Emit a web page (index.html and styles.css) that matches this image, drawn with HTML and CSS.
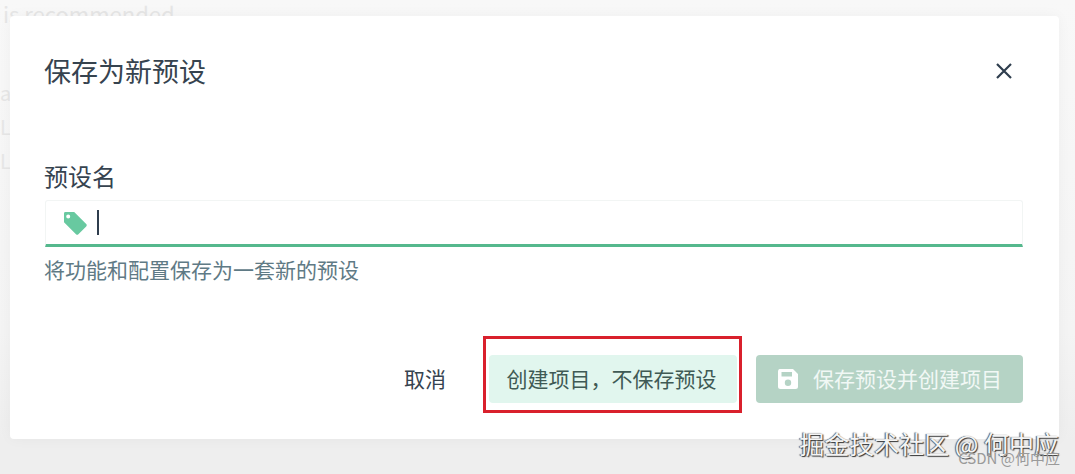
FILE: index.html
```html
<!DOCTYPE html>
<html lang="zh-CN">
<head>
    <meta charset="utf-8">
    <title>保存为新预设</title>
    <link rel="stylesheet" href="styles.css">
</head>
<body>
    <div class="backdrop">
        <div class="backdrop-title">is recommended</div>
        <div class="backdrop-line">a</div>
        <div class="backdrop-line">L</div>
        <div class="backdrop-line">L</div>
    </div>

    <div class="dialog">
        <div class="dialog-header">
            <h2>保存为新预设</h2>
            <svg class="close-icon" width="18" height="18" viewBox="0 0 18 18">
                <path d="M2 2L16 16M16 2L2 16" stroke="#2f3e4e" stroke-width="2.2" fill="none"/>
            </svg>
        </div>

        <div class="field">
            <label>预设名</label>
            <div class="input-box">
                <svg class="tag-icon" width="25" height="25" viewBox="0 0 25 25">
                    <path fill-rule="evenodd" fill="#68c9a0" d="M2.4 2H11.2L23.2 14Q24.3 15.2 23.2 16.4L15.4 24.2Q14.2 25.2 13 24.2L1 12.2V3.4Q1 2 2.4 2ZM5.2 4.4A2 2 0 1 0 5.2 8.4A2 2 0 1 0 5.2 4.4Z"/>
                </svg>
                <span class="caret"></span>
            </div>
            <div class="hint">将功能和配置保存为一套新的预设</div>
        </div>

        <div class="dialog-footer">
            <button class="btn btn-text">取消</button>
            <button class="btn btn-light">创建项目，不保存预设</button>
            <button class="btn btn-primary">
                <svg width="22" height="22" viewBox="0 0 22 22">
                    <path fill-rule="evenodd" fill="#fff" d="M2.5 1H16L21 6V18.5Q21 21 18.5 21H3.5Q1 21 1 18.5V3.5Q1 1 2.5 1ZM4.5 4V8.5H15V4ZM11 11.5A3.2 3.2 0 1 0 11 17.9A3.2 3.2 0 1 0 11 11.5Z"/>
                </svg>
                保存预设并创建项目
            </button>
        </div>
    </div>

    <div class="highlight-box"></div>
    <div class="watermark">掘金技术社区 @ 何中应</div>
    <div class="watermark-small">CSDN @何中应</div>
</body>
</html>
```

FILE: styles.css
```css
html, body {
    margin: 0;
    height: 474px;
    overflow: hidden;
}
body {
    font-family: "Noto Sans CJK SC", "Liberation Sans", sans-serif;
    background: linear-gradient(#f8f8f8, #f4f4f4 70%, #eeeeee 93%);
    color: #2f3e4e;
}
.backdrop {
    color: #e6e6e6;
    font-size: 22px;
}
.backdrop-title {
    margin-left: 3px;
    line-height: 26px;
    height: 76px;
}
.backdrop-line {
    height: 34px;
    line-height: 34px;
    font-size: 20px;
}
.dialog {
    position: absolute;
    left: 10px;
    top: 16px;
    width: 1049px;
    height: 423px;
    box-sizing: border-box;
    padding: 35px 46px 36px 35px;
    background: #fff;
    border-radius: 4px;
    box-shadow: 0 0 14px rgba(0,0,0,0.04);
    display: flex;
    flex-direction: column;
}
.dialog-header {
    display: flex;
    justify-content: space-between;
    align-items: center;
    height: 40px;
}
.dialog-header h2 {
    margin: 0 0 0 -1px;
    font-size: 27px;
    font-weight: 400;
    line-height: 40px;
    color: #36434f;
}
.field {
    margin: 67px -10px 0 0;
}
.field label {
    display: block;
    margin-left: -1px;
    font-size: 24px;
    line-height: 36px;
    color: #36434f;
}
.input-box {
    margin-top: 6px;
    height: 47px;
    box-sizing: border-box;
    display: flex;
    align-items: center;
    gap: 9px;
    padding-left: 17px;
    border: 1px solid #f2f5f4;
    border-bottom: 3px solid #55b88d;
    border-radius: 3px 3px 0 0;
}
.caret {
    width: 2px;
    height: 25px;
    background: #2f3e4e;
}
.hint {
    margin: 7px 0 0 -1px;
    font-size: 21px;
    line-height: 30px;
    color: #5f7a85;
}
.dialog-footer {
    margin: auto -10px 0 0;
    display: flex;
    justify-content: flex-end;
    align-items: center;
    gap: 19px;
}
.btn {
    height: 48px;
    border: 0;
    border-radius: 4px;
    font-family: inherit;
    font-size: 21px;
    display: flex;
    align-items: center;
    justify-content: center;
    padding: 0 0 3px;
}
.btn-text {
    width: 42px;
    margin-right: 23px;
    background: none;
    color: #36434f;
    position: relative;
    left: -1px;
}
.btn-light {
    width: 248px;
    padding-right: 3px;
    background: #e1f6ee;
    color: #3f5a55;
}
.btn-primary {
    width: 267px;
    gap: 14px;
    background: #b5d3c5;
    color: #f1f8f5;
}
.btn-primary svg {
    margin-top: 3px;
}
.highlight-box {
    position: absolute;
    left: 483px;
    top: 336px;
    width: 259px;
    height: 77px;
    box-sizing: border-box;
    border: 3px solid #d9202c;
}
.watermark {
    position: absolute;
    right: 16px;
    top: 426px;
    font-size: 25px;
    line-height: 34px;
    color: #f4f4f4;
    white-space: nowrap;
    text-shadow: 1px 1px 1px #333, -1px 0 1px #555;
}
.watermark-small {
    position: absolute;
    right: 15px;
    top: 448px;
    font-size: 15px;
    line-height: 20px;
    color: #9a9a9a;
    white-space: nowrap;
}
```
